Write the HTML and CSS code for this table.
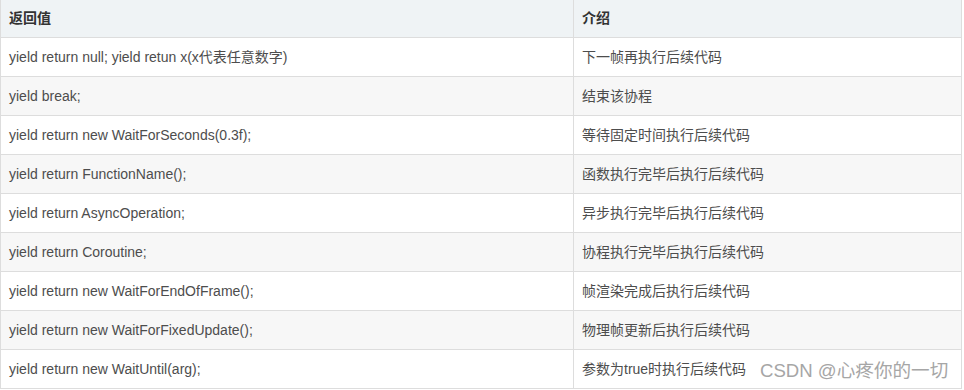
FILE: index.html
```html
<!DOCTYPE html>
<html lang="zh">
<head>
<meta charset="utf-8">
<link rel="stylesheet" href="styles.css">
</head>
<body>
<div class="wrap">
<table class="tbl">
  <thead>
    <tr><th class="c1">返回值</th><th>介绍</th></tr>
  </thead>
  <tbody>
    <tr><td>yield return null; yield retun x(x代表任意数字)</td><td>下一帧再执行后续代码</td></tr>
    <tr><td>yield break;</td><td>结束该协程</td></tr>
    <tr><td>yield return new WaitForSeconds(0.3f);</td><td>等待固定时间执行后续代码</td></tr>
    <tr><td>yield return FunctionName();</td><td>函数执行完毕后执行后续代码</td></tr>
    <tr><td>yield return AsyncOperation;</td><td>异步执行完毕后执行后续代码</td></tr>
    <tr><td>yield return Coroutine;</td><td>协程执行完毕后执行后续代码</td></tr>
    <tr><td>yield return new WaitForEndOfFrame();</td><td>帧渲染完成后执行后续代码</td></tr>
    <tr><td>yield return new WaitForFixedUpdate();</td><td>物理帧更新后执行后续代码</td></tr>
    <tr><td>yield return new WaitUntil(arg);</td><td>参数为true时执行后续代码</td></tr>
  </tbody>
</table>
<div class="watermark">CSDN @心疼你的一切</div>
</div>
</body>
</html>
```
FILE: styles.css
```css
html, body {
  margin: 0;
  padding: 0;
  background: #ffffff;
}
.wrap {
  position: relative;
  width: 964px;
  height: 390px;
  overflow: hidden;
}
.tbl {
  border-collapse: collapse;
  table-layout: fixed;
  width: 962px;
  margin-top: -2px;
  font-family: "Liberation Sans", Arial, "Noto Sans CJK SC", sans-serif;
  font-size: 14px;
  color: #4d4d4d;
}
.tbl th, .tbl td {
  border: 1px solid #dddddd;
  padding: 8px 8px;
  line-height: 22px;
  text-align: left;
  white-space: nowrap;
}
.tbl th {
  background: #eff3f5;
  font-weight: bold;
  color: #333333;
}
.tbl th.c1 {
  width: 573px;
  box-sizing: border-box;
}
.tbl tbody tr {
  background: #ffffff;
}
.tbl tbody tr:nth-child(2n) {
  background: #f7f7f7;
}
.watermark {
  position: absolute;
  left: 760px;
  top: 358px;
  font-family: "Liberation Sans", Arial, "Noto Sans CJK SC", sans-serif;
  font-size: 18.6px;
  line-height: 26px;
  color: #a6a6a6;
  white-space: nowrap;
}
```
